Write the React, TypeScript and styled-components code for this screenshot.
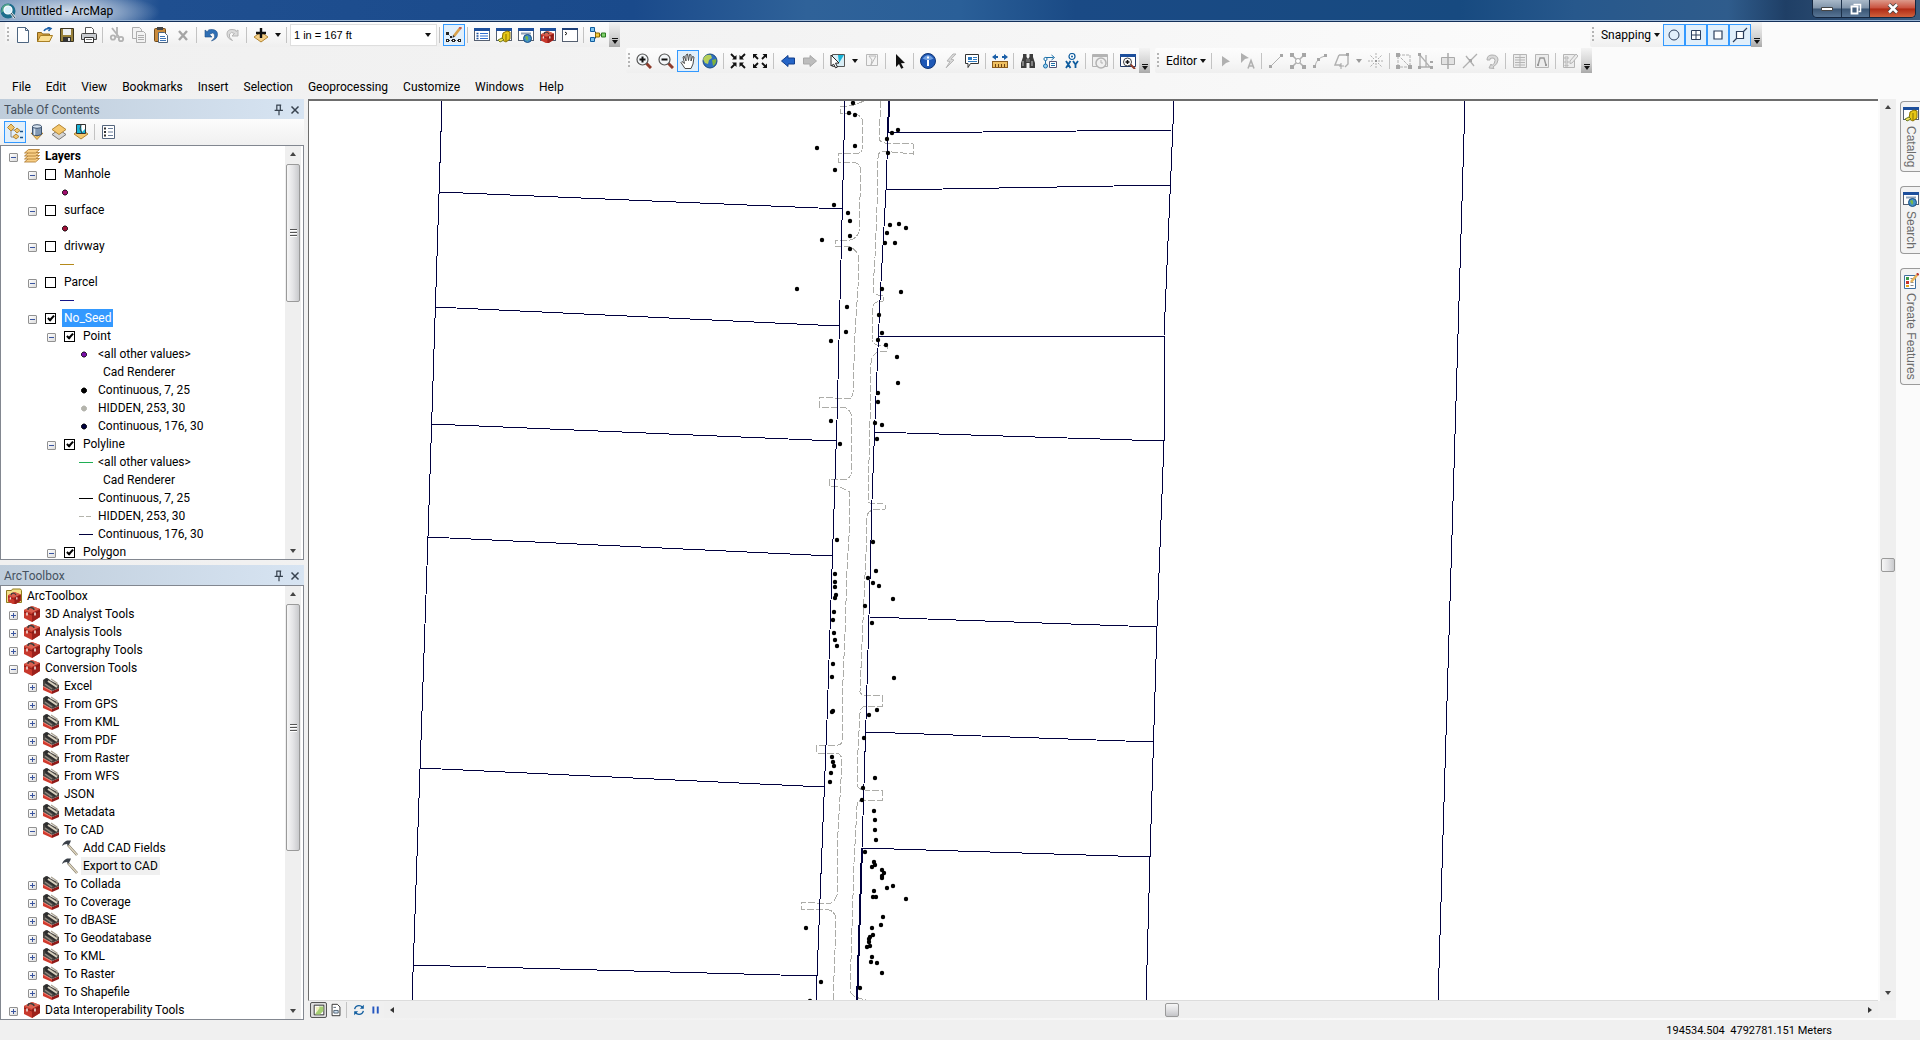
import React, { useState } from "react";
import styled, { createGlobalStyle, css } from "styled-components";

const GlobalStyle = createGlobalStyle`
  *, *::before, *::after { box-sizing: border-box; }
  html, body { margin: 0; padding: 0; }
  body {
    font-family: Roboto, "Open Sans", sans-serif;
    font-size: 12px;
    line-height: 18px;
    color: #000;
    background: #f0f0f0;
    overflow: hidden;
  }
  button, select, input { font: inherit; color: inherit; margin: 0; }
`;

/* ---------- icons ---------- */

const boxTool = (
  <>
    <path d="M0 4l8-4 8 3v8l-8 5-8-4z" fill="#c8382c" />
    <path d="M0 4l8-4 8 3-8 4z" fill="#d9604f" />
    <path d="M8 7l8-4v8l-8 5z" fill="#9c211b" />
    <path d="M0 6l8 3 8-4" stroke="#7a1612" fill="none" strokeWidth=".8" />
    <path d="M4 4q0-3 3-2.500 3 .5 3 2.500" stroke="#3c3c3c" fill="none" strokeWidth="1.400" />
    <path d="M3 6.500v3M11 6.500v3" stroke="#f3dcd8" strokeWidth="1.600" />
  </>
);
const toolset = (
  <>
    <path d="M0 8l9 5v3l-9-4z" fill="#d0392c" />
    <path d="M9 13l7-3v3l-7 3z" fill="#8e1a18" />
    <path d="M0 8V2l3-2 13 7v3l-7 3z" fill="#4b4743" />
    <path d="M1 2l3-2 3 2v2l6 4-1 3-6-4-3-1z" fill="#2e2e2e" />
    <path d="M2 6l7 5" stroke="#8f8a80" strokeWidth="1.500" />
    <path d="M5 3l9 6" stroke="#d9d2c0" strokeWidth="2" />
    <path d="M8 1l6 4v3" stroke="#a79f8e" strokeWidth="1.200" fill="none" />
    <path d="M0 8.500l9 5" stroke="#f28a7c" strokeWidth=".8" />
  </>
);
const win = (
  <>
    <rect x=".5" y="1.500" width="15" height="12" fill="#fff" stroke="#555f70" />
    <rect x="0" y="1" width="16" height="3" fill="#1d4f9c" />
  </>
);
const cylinder = (
  <>
    <path d="M7 6l4-2 3 1v7l-4 3-4-2z" fill="#e6c716" stroke="#8a7200" />
    <path d="M10 7v7" stroke="#8a7200" />
    <path d="M2 13l4-2 2 2-4 2z" fill="#f5e05a" stroke="#6b7a20" />
  </>
);
const diamond = (y: number, fill: string, stroke: string) => (
  <path d={`M8 ${y}l7 5-7 5-7-5z`} fill={fill} stroke={stroke} />
);

const GLYPHS: Record<string, React.ReactNode> = {
  app: (
    <>
      <circle cx="8" cy="8" r="7.500" fill="#1c6d8c" />
      <path d="M2 4q3-4 8-3l-2 3-4 4-3 2z" fill="#4fa08a" />
      <circle cx="8" cy="7" r="4" fill="#d7f0fb" stroke="#fff" strokeWidth="1.200" />
      <path d="M11 10l4 5" stroke="#e8e8e8" strokeWidth="2.500" />
      <path d="M11 10l4 5" stroke="#24465c" strokeWidth="1" />
    </>
  ),
  new: <path d="M2.500 .5h8l3 3v12h-11zM10.500 .5v3h3" fill="#fff" stroke="#4d6580" />,
  open: (
    <>
      <path d="M.5 14.500v-9h4l1 1.500h7v7.500z" fill="#d9a441" stroke="#8a6418" />
      <path d="M.5 14.500l3-6h12l-3 6z" fill="#fbdf92" stroke="#a87f25" />
      <path d="M7 4q1-2.500 5-2.500M10.500 0L14 1.500 11.500 4" stroke="#1b5fa8" fill="none" strokeWidth="1.500" />
    </>
  ),
  save: (
    <>
      <path d="M1.500 1.500h13v13h-13z" fill="#97803a" stroke="#3a3420" />
      <path d="M4 2h8v6H4z" fill="#eef0f2" />
      <path d="M4 10h8v5H4z" fill="#333" />
      <path d="M9 11h2v3H9z" fill="#ddd" />
    </>
  ),
  print: (
    <>
      <path d="M4.500 7V.5h6l2 2V7" fill="#fff" stroke="#555" />
      <path d="M.5 7.500q0-1 1-1h13q1 0 1 1v5H.5z" fill="#c9ccd0" stroke="#444" />
      <path d="M3.500 10.500h9v5h-9z" fill="#fff" stroke="#333" />
      <path d="M5 12.500h6" stroke="#777" />
    </>
  ),
  cut: (
    <g stroke="#b3b3b3" fill="none" strokeWidth="1.800">
      <path d="M3 1l7 9M8 0L8 9" />
      <circle cx="4" cy="10.500" r="2.200" />
      <circle cx="12" cy="12" r="2.200" />
      <path d="M6 9.500l4 1" />
    </g>
  ),
  copy: (
    <g fill="#f2f2f2" stroke="#adadad">
      <path d="M1.500 .5h7l2 2v9h-9z" />
      <path d="M5.500 4.500h7l2 2v9h-9z" />
      <path d="M7 8.500h6M7 10.500h6M7 12.500h6" />
    </g>
  ),
  paste: (
    <>
      <rect x="1.500" y="1.500" width="11" height="13" rx="1" fill="#c98a3a" stroke="#6f4a1b" />
      <rect x="4" y="0" width="6" height="3" fill="#444" />
      <path d="M5.500 5.500h6l3 3v7h-9z" fill="#fff" stroke="#4d6580" />
      <path d="M7 9.500h5M7 11.500h6M7 13.500h6" stroke="#3f74b5" />
    </>
  ),
  del: <path d="M4 4l8 9M12 4l-8 9" stroke="#a5a5a5" strokeWidth="2.400" />,
  undo: (
    <path
      d="M2 3v7h7L6.500 7.500Q10 4.500 11.500 7.500t-3 6.500Q14.500 12 14.500 7.500T9.500 2.500 4.500 5z"
      fill="#2f6fb5"
      stroke="#1d4d86"
      strokeWidth=".600"
    />
  ),
  redo: (
    <path
      d="M13 3v6H7l2.500-2.500Q6 4 4.500 7t3 6.500Q2 11.500 2 7t5-4.500 4 2z"
      fill="#dcdcdc"
      stroke="#b5b5b5"
    />
  ),
  add: (
    <>
      {diamond(5, "#f5cf86", "#b38634")}
      <path d="M8 1v10M3 6h10" stroke="#111" strokeWidth="2.400" />
    </>
  ),
  editor: (
    <>
      <path d="M8 9l5.500-7" stroke="#d9a24b" strokeWidth="2.800" />
      <path d="M13.500 2l1.500-2" stroke="#c8604c" strokeWidth="2.800" />
      <path d="M6.500 11l.5-3 2 1.500z" fill="#333" />
      <path d="M2 7l3 3M2 13.500h11" stroke="#333" strokeDasharray="2 1" />
      <path d="M0 5h3v3H0zM4 9h2v2H4zM0 12h3v3H0zM6 12h3v3H6zM12 12h3v3h-3z" fill="#222" />
      <path d="M1 13h1v1H1zM7 13h1v1H7zM13 13h1v1h-1z" fill="#fff" />
    </>
  ),
  toc: (
    <>
      {win}
      <path d="M2.500 6.500h2M2.500 9h2M2.500 11.500h2" stroke="#1d4f9c" strokeWidth="1.500" />
      <path d="M6 6.500h8M6 9h8M6 11.500h8" stroke="#2f6fd0" />
    </>
  ),
  catalog: (
    <>
      {win}
      {cylinder}
    </>
  ),
  search: (
    <>
      {win}
      <path d="M3 6.500h10" stroke="#8fa2b8" strokeWidth="2" />
      <circle cx="9.500" cy="11.500" r="4" fill="#3f8fc6" stroke="#1b4f83" />
      <path d="M7 10q2-2 3 0t-1 4z" fill="#79b64b" />
    </>
  ),
  toolboxWin: (
    <>
      {win}
      <g transform="translate(1 4) scale(.8)">{boxTool}</g>
    </>
  ),
  python: (
    <>
      <rect x=".5" y="1.500" width="15" height="13" fill="#fff" stroke="#555f70" />
      <rect x="0" y="1" width="16" height="2" fill="#1d3f78" />
      <path d="M3 5l2 1.500L3 8" stroke="#111" fill="none" />
    </>
  ),
  model: (
    <>
      <path d="M4 3l3 5-3 5M9 8h4" stroke="#333" fill="none" />
      <path d="M.5 .5h4v4h-4zM.5 10.500h4v4h-4z" fill="#7cc3ee" stroke="#0f5c9e" />
      <path d="M5.500 6h4v4h-4z" fill="#f5c93a" stroke="#8a6a00" />
      <path d="M11.500 6h4v4h-4z" fill="#7fd06a" stroke="#2c7a20" />
    </>
  ),
  zoomIn: (
    <>
      <path d="M10 10l5 5" stroke="#8d3a2a" strokeWidth="3" />
      <circle cx="6.500" cy="6.500" r="5.500" fill="#f3f6f8" stroke="#555" strokeWidth="1.200" />
      <path d="M6.500 3.500v6M3.500 6.500h6" stroke="#111" strokeWidth="2" />
    </>
  ),
  zoomOut: (
    <>
      <path d="M10 10l5 5" stroke="#8d3a2a" strokeWidth="3" />
      <circle cx="6.500" cy="6.500" r="5.500" fill="#f3f6f8" stroke="#555" strokeWidth="1.200" />
      <path d="M3.500 6.500h6" stroke="#111" strokeWidth="2" />
    </>
  ),
  pan: (
    <path
      d="M5 15.500L1 9.500l1-1 2.500 2L3 4l1.200-.8L6 8V2l1.500-1L8.500 7.500 9.500 1.500l1.500.3V8l1.500-4.500 1.500.5-1 7-2 4.500z"
      fill="#fff"
      stroke="#4a4a4a"
    />
  ),
  globe: (
    <>
      <circle cx="8" cy="8" r="7" fill="#2f6fc0" stroke="#1a4b7c" />
      <path d="M3 3q3-2 6-1l1 3-3 2-1 4-3-1-2-4z" fill="#b6d05a" />
      <path d="M10 7l4-1q1 4-3 7z" fill="#7fb33c" />
    </>
  ),
  fixedIn: (
    <g stroke="#111" strokeWidth="1.800">
      <path d="M1 1l4 4M15 1l-4 4M1 15l4-4M15 15l-4-4" />
      <path d="M6.500 2v4.500H2zM9.500 2v4.500H14zM6.500 14V9.500H2zM9.500 14V9.500H14z" fill="#111" stroke="none" />
    </g>
  ),
  fixedOut: (
    <g stroke="#111" strokeWidth="1.800">
      <path d="M2 2l4 4M14 2l-4 4M2 14l4-4M14 14l-4-4" />
      <path d="M1 5.500V1h4.500zM15 5.500V1h-4.500zM1 10.500V15h4.500zM15 10.500V15h-4.500z" fill="#111" stroke="none" />
    </g>
  ),
  back: <path d="M1.500 8L8 2.500V5h6.500v6H8v2.500z" fill="#2565c7" stroke="#123f8c" />,
  forward: <path d="M14.500 8L8 2.500V5H1.500v6H8v2.500z" fill="#bdbdbd" stroke="#a8a8a8" />,
  select: (
    <>
      <path d="M2.500 1.500h12v12h-12z" fill="#d9edf5" stroke="#555" />
      <path d="M8 2h6L9 10z" fill="#19b4d8" />
      <path d="M1 2l8 8-3.500.2L7.500 14l-2 .8-1.800-3.600L1 13z" fill="#fff" stroke="#222" />
    </>
  ),
  clear: (
    <g fill="#f4f4f4" stroke="#b9b9b9">
      <path d="M2.500 1.500h11v11h-11z" />
      <path d="M5 3l3 4-1 5 5-9z" />
    </g>
  ),
  pointer: <path d="M4 1l9 9-4 .3 2.500 4.500-2.300 1-2.200-4.700L4 14z" fill="#111" />,
  info: (
    <>
      <circle cx="8" cy="8" r="7.500" fill="#1f58b5" stroke="#0f3577" />
      <path d="M2.500 5.500Q8-1.500 13.500 5.500 8 9 2.500 5.500z" fill="#6f9ee0" />
      <path d="M7 7h2v6H7zM7 3.500h2v2H7z" fill="#fff" />
    </>
  ),
  bolt: <path d="M11 1L5 8l3 .5L4 15l8-8-3-.8L14 1z" fill="#dadada" stroke="#b5b5b5" />,
  popup: (
    <>
      <path d="M1.500 1.500h13v9h-8l-2.500 4v-4H1.500z" fill="#fff" stroke="#333" />
      <path d="M4 4h4v3H4z" fill="#2f7ac0" />
      <path d="M9 4.500h4M9 6.500h4M4 8.500h9" stroke="#2f7ac0" />
    </>
  ),
  measure: (
    <>
      <path d="M0 4l4-3v2h2v2H4v2zM16 4l-4-3v2h-2v2h2v2z" fill="#1b5fa8" />
      <rect x=".5" y="8.500" width="15" height="6" fill="#f0c060" stroke="#8a5a1c" />
      <path d="M3.500 11v3M6.500 11v3M9.500 11v3M12.500 11v3" stroke="#6f4312" />
    </>
  ),
  find: (
    <>
      <path d="M3 1h3.500v3L8 6l1.500-2V1H13v3l2 6v5H9.500v-5h-3v5H1v-5l2-6z" fill="#3d3d3d" />
      <path d="M3 8v5M12 8v5" stroke="#999" strokeWidth="1.500" />
      <path d="M6 6h4v3H6z" fill="#666" />
    </>
  ),
  route: (
    <>
      <path d="M3.500 13V4.500h8M9.500 2l3 2.500-3 2.500" stroke="#1b6fa8" fill="none" />
      <path d="M7.500 8.500h7v6h-7z" fill="#fff" stroke="#557" />
      <path d="M9 10.500h4M9 12.500h4" stroke="#1b6fa8" />
      <circle cx="3.500" cy="13" r="2" fill="#9cd0f0" stroke="#1b6fa8" />
      <circle cx="3.500" cy="6" r="1.600" fill="#fff" stroke="#1b6fa8" />
    </>
  ),
  xy: (
    <>
      <circle cx="8" cy="3.500" r="3" fill="#fff" stroke="#0f5c9e" strokeWidth="1.200" />
      <circle cx="8" cy="3.500" r="1" fill="#0f5c9e" />
      <path d="M2 8l4.500 7M6.500 8L2 15M9 8l2.500 3.500L14 8M11.500 11.500V15" stroke="#0f5c9e" strokeWidth="1.800" fill="none" />
    </>
  ),
  time: (
    <g fill="#f0f0f0" stroke="#b3b3b3">
      <path d="M.5 1.500h15v12H.5z" />
      <path d="M1 3h14" strokeWidth="2" />
      <circle cx="9" cy="10" r="5" strokeWidth="1.500" />
      <path d="M9 7v3h2" fill="none" />
    </g>
  ),
  viewer: (
    <>
      <path d="M.5 1.500h15v12H.5z" fill="#fff" stroke="#223a66" />
      <path d="M0 1h16v3H0z" fill="#1d4f9c" />
      <path d="M10 11l5 5" stroke="#8d3a2a" strokeWidth="2" />
      <circle cx="7.500" cy="9" r="4" fill="#fff" stroke="#444" />
      <path d="M7.500 7v4M5.500 9h4" stroke="#111" strokeWidth="1.500" />
    </>
  ),
  edArrow: <path d="M4 3l8 5.500L8 10l-4 3.500z" fill="#b0b0b0" />,
  edArrowA: (
    <>
      <path d="M1 0l8 5-4 1-4 4z" fill="#b0b0b0" />
      <path d="M8 15.500l3-8 3 8M9.500 13h3.500" stroke="#b0b0b0" fill="none" strokeWidth="1.600" />
    </>
  ),
  edLine: (
    <>
      <path d="M3 13L13 3" stroke="#b0b0b0" />
      <path d="M1 12h3v3H1zM12 1h3v3h-3z" fill="#a6a6a6" />
    </>
  ),
  edCross: (
    <>
      <path d="M2 2l12 12M14 2L2 14" stroke="#b0b0b0" strokeWidth="1.500" />
      <path d="M0 0h4v4H0zM12 0h4v4h-4zM0 12h4v4H0zM12 12h4v4h-4z" fill="#a6a6a6" />
      <circle cx="8" cy="8" r="2.500" fill="#fff" stroke="#a6a6a6" />
    </>
  ),
  edCurve: (
    <>
      <path d="M3 14Q4 5 13 3" stroke="#b0b0b0" fill="none" />
      <path d="M1 12h3v3H1zM5 5h3v3H5zM12 1h3v3h-3z" fill="#a6a6a6" />
    </>
  ),
  edTrace: (
    <>
      <path d="M5 2h9v9l-3 3M5 2L1 12h6" stroke="#b0b0b0" fill="none" strokeWidth="1.400" />
      <path d="M7 10v6M5 13h5" stroke="#a6a6a6" />
      <path d="M12 0h3v3h-3z" fill="#a6a6a6" />
    </>
  ),
  edPoint: (
    <g stroke="#b0b0b0" strokeDasharray="2 1">
      <path d="M8 0v6M8 10v6M0 8h6M10 8h6M2.500 2.500L6 6M13.500 2.500L10 6M2.500 13.500L6 10M13.500 13.500L10 10" />
      <path d="M7 7h2v2H7z" fill="#999" stroke="none" />
    </g>
  ),
  edVerts: (
    <>
      <path d="M2 14V2l12 12zM2 2h12v12" stroke="#b0b0b0" fill="none" strokeDasharray="3 1" />
      <path d="M0 0h4v4H0zM12 12h4v4h-4zM0 12h4v4H0z" fill="#a6a6a6" />
    </>
  ),
  edReshape: (
    <>
      <path d="M2 14V2l10 12zM8 2v12" stroke="#b0b0b0" fill="none" strokeWidth="1.300" />
      <path d="M0 0h3v3H0zM0 13h3v3H0zM12 13h3v3h-3zM12 8h3v2h-3z" fill="#a6a6a6" />
    </>
  ),
  edCut: (
    <>
      <path d="M1.500 4.500h13v7h-13z" fill="#e2e2e2" stroke="#a9a9a9" />
      <path d="M8 0v16" stroke="#a9a9a9" strokeWidth="1.500" />
    </>
  ),
  edSplit: (
    <>
      <path d="M1 15L15 1M4 3l8 10" stroke="#b0b0b0" strokeWidth="1.300" />
      <path d="M7 6h3v3H7z" fill="#a6a6a6" />
    </>
  ),
  edRotate: (
    <path d="M3 7q0-5 5-5 6 0 6 5 0 4-5 7l1 1.500-5-.5 2-4 1 1.500q3-2 3-5T8 5 6 7z" fill="#dadada" stroke="#b0b0b0" />
  ),
  edTable: (
    <g fill="#ececec" stroke="#b5b5b5">
      <path d="M1.500 1.500h13v13h-13z" />
      <path d="M3 4.500h10M3 7h10M3 9.500h10M3 12h10M8 2v12" />
    </g>
  ),
  edSketch: (
    <>
      <path d="M1.500 1.500h13v13h-13z" fill="#ececec" stroke="#b5b5b5" />
      <path d="M4 12l2-7h4l2 7" stroke="#999" fill="none" strokeWidth="1.400" />
      <path d="M3 11h2v2H3zM11 11h2v2h-2z" fill="#999" />
    </>
  ),
  edCreate: (
    <g fill="#ececec" stroke="#b5b5b5">
      <path d="M1.500 1.500h11v13h-11z" />
      <path d="M3 4h3v2H3zM3 8h3v2H3zM3 12h3v1H3zM8 8l6-7 2 2-6 7-2 .5z" />
    </g>
  ),
  snapPoint: <circle cx="8" cy="8" r="5" fill="none" stroke="#2c3e5c" />,
  snapEnd: <path d="M3.500 3.500h9v9h-9zM8 3.500v9M3.500 8h9" fill="#fff" stroke="#2c3e5c" />,
  snapVertex: <path d="M4 4h8v8H4z" fill="#fff" stroke="#2c3e5c" strokeWidth="1.200" />,
  snapEdge: <path d="M4.500 4.500h7v7h-7zM1 15l3.500-3.500M11.500 4.500L15 1" fill="#fff" stroke="#2c3e5c" strokeWidth="1.200" />,
  byDrawing: (
    <>
      <path d="M4 5v8M4 6h5M4 13h5" stroke="#888" fill="none" />
      <path d="M4 0l3.500 3.500L4 7 .5 3.500zM10 4l3 2.500L10 9 7.500 6.500zM9 10l3 2.500L9 15l-3-2.500z" fill="#f0c56e" stroke="#b38634" />
      <path d="M13 7.500h3M13 13.500h3" stroke="#1b4f83" strokeWidth="1.500" />
    </>
  ),
  bySource: (
    <>
      <path d="M2 9l6 3 6-3-6 6.500z" fill="#f5c86e" stroke="#b38634" />
      <path d="M3.500 2.500v8q4.500 2.500 9 0v-8z" fill="#8299b5" stroke="#3e536e" />
      <path d="M5.500 4v7" stroke="#d8e4f0" strokeWidth="1.500" />
      <ellipse cx="8" cy="2.500" rx="4.500" ry="1.800" fill="#d8e4f0" stroke="#3e536e" />
    </>
  ),
  byVisibility: (
    <>
      {diamond(5.5, "#d5d5d5", "#777")}
      {diamond(0.5, "#f5c86e", "#b38634")}
    </>
  ),
  bySelection: (
    <>
      {diamond(5, "#f5c86e", "#b38634")}
      <path d="M3.500 .5h9v9h-9z" fill="#19b4d8" stroke="#333" />
      <path d="M8 1h4v4l-3 3z" fill="#fff" />
      <path d="M8 1L7 5l2 4" stroke="#333" fill="none" />
    </>
  ),
  options: (
    <>
      <path d="M1.500 1.500h12v13h-12z" fill="#fff" stroke="#54657d" />
      <path d="M3 4.500h2M3 8h2M3 11.500h2" stroke="#333" strokeWidth="2" />
      <path d="M7 4.500h5M7 8h5M7 11.500h5" stroke="#6a7f9c" />
    </>
  ),
  layers: (
    <g fill="#f9cf86" stroke="#a8742a" strokeWidth=".800">
      <path d="M.5 14l4-3.500h11l-4 3.500z" />
      <path d="M.5 11l4-3.500h11l-4 3.500z" />
      <path d="M.5 8l4-3.500h11l-4 3.500z" />
      <path d="M.5 5l4-3.500h11l-4 3.500z" />
    </g>
  ),
  boxTool,
  toolset,
  hammer: (
    <>
      <path d="M6 5l9 10" stroke="#77705f" strokeWidth="2.600" />
      <path d="M6 5l9 10" stroke="#e2d9c2" strokeWidth="1.300" />
      <path d="M0 6q1-4 5-5.500h4L8 3 6 6 5 4Q2 4 0 6z" fill="#3a4048" />
    </>
  ),
  boxRoot: (
    <>
      <path d="M.5 2.500h5l1-1.500h8l1 1.500v12H.5z" fill="#f3e089" stroke="#8f7a1e" />
      <g transform="translate(2 4) scale(.8)">{boxTool}</g>
    </>
  ),
  create: (
    <>
      <path d="M1.500 2.500h11v13h-11z" fill="#fff" stroke="#3e6fa0" />
      <path d="M3 4h3v3H3z" fill="#3a9a4a" />
      <path d="M3 8h3v3H3z" fill="#c8322a" />
      <path d="M3 12h3v2H3z" fill="#e6a516" />
      <path d="M7.500 5.500h3M7.500 9.500h3M7.500 12.500h3" stroke="#888" />
      <path d="M8 9l6-7" stroke="#e6b35a" strokeWidth="2.600" />
      <path d="M14 2l1.500-1.500" stroke="#c23a2f" strokeWidth="2.600" />
    </>
  ),
  dataView: (
    <>
      <path d="M2.500 2.500h11v11h-11z" fill="#fff" stroke="#222" />
      <path d="M4 12l4-8h5v5l-4 4H4z" fill="#a5cf72" />
      <path d="M4 4l5 1-4 6z" fill="#f2f0c0" />
    </>
  ),
  layoutView: (
    <>
      <path d="M3.500 1.500h6l3 3v10h-9z" fill="#fff" stroke="#222" />
      <path d="M5 5h3M5.500 8.500h5v3h-5z" fill="#cfe2f5" stroke="#456" />
    </>
  ),
  refresh: (
    <g stroke="#0f5c9e" fill="none" strokeWidth="1.500">
      <path d="M3 7q1-4 5-4 2.500 0 4 2M13 9q-1 4-5 4-2.500 0-4-2" />
      <path d="M13.500 2v4.500H9zM2.500 14V9.500H7z" fill="#0f5c9e" stroke="none" />
    </g>
  ),
  pause: <path d="M5 4v8M10 4v8" stroke="#2456c0" strokeWidth="2.200" />,
  pin: (
    <path d="M5.500 2v6M5 2.500h5.500M9.500 2v6M3 8.500h9.500M8 9v5" stroke="#37424f" fill="none" strokeWidth="1.400" />
  ),
  close: <path d="M4 4l8 8M12 4l-8 8" stroke="#37424f" strokeWidth="1.700" />,
};

const Glyph = styled.svg.attrs({ viewBox: "0 0 16 16", "aria-hidden": true })`
  width: 16px;
  height: 16px;
  flex: none;
  display: block;
`;
const Icon = ({ name }: { name: string }) => <Glyph>{GLYPHS[name]}</Glyph>;

/* ---------- shell ---------- */

const Shell = styled.div`
  height: 100vh;
  display: flex;
  flex-direction: column;
  background: linear-gradient(90deg, #f0f0f0, #f3f3f3 40%, #fbfbfb 80%);
`;

const TitleBar = styled.header`
  display: flex;
  align-items: flex-start;
  height: 22px;
  flex: none;
  padding-right: 4px;
  border-bottom: 1px solid #14305a;
  box-shadow: inset 0 -1px 0 #9db8d6;
  background:
    radial-gradient(ellipse 90px 20px at 70px 12px, rgba(225, 232, 240, 0.9), rgba(160, 185, 214, 0) 100%),
    linear-gradient(90deg, #7e9abd 0, #6486b4 90px, #1f4f90 160px, #1a4a8b 33%, #2f6299 42%, #2a5f98 50%, #1a4a85 56%, #174a80 76%, #27588c 82%, #2f5c8c 90%, #1f3f66 93%, #3c5d80);
`;
const TitleText = styled.h1`
  display: flex;
  align-items: center;
  gap: 5px;
  margin: 0;
  padding: 2px 0 0 0;
  flex: 1;
  font-size: 12px;
  line-height: 18px;
  font-weight: 400;
`;
const WindowButtons = styled.div`
  display: flex;
  border: 1px solid #14263f;
  border-top: 0;
  border-radius: 0 0 5px 5px;
  overflow: hidden;
`;
const WindowButton = styled.button<{ $close?: boolean }>`
  width: ${(p) => (p.$close ? 46 : 28)}px;
  height: 17px;
  padding: 0;
  display: grid;
  place-items: center;
  border: 0;
  border-left: 1px solid #1c3049;
  color: #fff;
  background: ${(p) =>
    p.$close
      ? "linear-gradient(#dd9a8b, #c9503c 48%, #b02a14 52%, #d0613c)"
      : "linear-gradient(#a9b9c9, #7f93a9 48%, #3a5573 52%, #587595)"};
  &:first-child { border-left: 0; }
`;

const ToolbarArea = styled.div`
  flex: none;
`;
const ToolRow = styled.div<{ $indent: number }>`
  display: flex;
  justify-content: space-between;
  height: 26px;
  padding-left: ${(p) => p.$indent}px;
  padding-right: 158px;
`;
const ToolGroup = styled.div`
  display: flex;
  min-width: 0;
  gap: 5px;
`;
const Bar = styled.div`
  display: flex;
  align-items: center;
  height: 25px;
  border-radius: 2px;
  background: linear-gradient(#fdfdfd, #f6f6f6 60%, #efefef);
`;
const Grip = styled.span`
  width: 2px;
  height: 16px;
  margin: 0 3px 0 2px;
  background: repeating-linear-gradient(#b4b4b4 0 2px, transparent 2px 4px);
`;
const Separator = styled.span`
  width: 1px;
  height: 16px;
  margin: 0 3px 0 2px;
  background: #c3c3c3;
`;
const onState = css`
  border-color: #3399ff;
  background: #e1effb;
`;
const ToolButton = styled.button<{ $on?: boolean }>`
  width: 22px;
  height: 22px;
  padding: 0;
  display: grid;
  place-items: center;
  flex: none;
  border: 1px solid transparent;
  background: transparent;
  ${(p) => p.$on && onState}
`;
const TextButton = styled.button`
  display: flex;
  align-items: center;
  gap: 3px;
  padding: 0 3px 0 4px;
  border: 0;
  background: transparent;
`;
const Arrow = styled.span<{ $dim?: boolean }>`
  width: 0;
  height: 0;
  border: 3px solid transparent;
  border-top: 4px solid ${(p) => (p.$dim ? "#999" : "#111")};
  border-bottom: 0;
`;
const DropButton = styled.button`
  width: 12px;
  height: 22px;
  padding: 0;
  display: grid;
  place-items: center;
  border: 0;
  background: transparent;
`;
const Overflow = styled.button`
  align-self: stretch;
  width: 11px;
  padding: 0 0 3px;
  display: flex;
  flex-direction: column;
  align-items: center;
  justify-content: flex-end;
  gap: 1px;
  border: 0;
  background: linear-gradient(#f4f4f4, #d2d2d2 60%, #a9a9a9);
  &::before { content: ""; width: 6px; height: 1px; background: #111; }
`;
const ScaleWrap = styled.div`
  display: flex;
  align-items: center;
  width: 147px;
  height: 22px;
  padding-right: 5px;
  border: 1px solid #dedede;
  background: #fff;
`;
const ScaleSelect = styled.select`
  appearance: none;
  flex: 1;
  border: 0;
  padding: 0 3px;
  background: transparent;
  outline: none;
  font-family: "Liberation Sans", Arial, sans-serif;
  font-size: 11px;
`;

const MenuBar = styled.nav`
  display: flex;
  align-items: center;
  height: 25px;
  padding-left: 4px;
`;
const MenuItem = styled.button`
  padding: 0 7px 0 8px;
  border: 0;
  background: transparent;
`;

type Item = string;
const renderItems = (items: Item[], onNames: string[] = []) =>
  items.map((it, i) => {
    if (it === "|") return <Separator key={i} />;
    if (it === "v" || it === "V")
      return (
        <DropButton key={i} aria-label="More">
          <Arrow $dim={it === "V"} />
        </DropButton>
      );
    return (
      <ToolButton key={i} $on={onNames.includes(it)} aria-label={it}>
        <Icon name={it} />
      </ToolButton>
    );
  });

const OverflowButton = () => (
  <Overflow aria-label="Toolbar options">
    <Arrow />
  </Overflow>
);

/* ---------- body ---------- */

const Body = styled.main`
  flex: 1;
  min-height: 0;
  display: flex;
`;
const Side = styled.aside`
  width: 304px;
  flex: none;
  display: flex;
  flex-direction: column;
  gap: 5px;
`;
const Panel = styled.section<{ $grow: number }>`
  flex: ${(p) => p.$grow} 1 0;
  min-height: 0;
  display: flex;
  flex-direction: column;
`;
const PanelHead = styled.div`
  display: flex;
  align-items: center;
  height: 20px;
  flex: none;
  padding: 2px 1px 0 4px;
  background: linear-gradient(90deg, #bfcddb, #d7e4f2);
`;
const PanelTitle = styled.h2`
  flex: 1;
  margin: 0;
  font-size: 12px;
  line-height: 18px;
  font-weight: 400;
  color: #46525f;
`;
const HeadButton = styled.button`
  width: 16px;
  height: 16px;
  padding: 0;
  border: 0;
  background: transparent;
  display: grid;
  place-items: center;
  & svg { width: 14px; height: 14px; }
`;
const PanelTools = styled.div`
  display: flex;
  align-items: center;
  height: 26px;
  flex: none;
  padding-left: 4px;
  background: linear-gradient(#fcfcfc, #f0f0f0);
`;
const TreeFrame = styled.div`
  flex: 1;
  min-height: 0;
  display: flex;
  padding-right: 2px;
  border: 1px solid #828790;
  background: #fff;
`;
const Tree = styled.ul`
  flex: 1;
  min-width: 0;
  margin: 0;
  padding: 1px 0 0;
  list-style: none;
  overflow: hidden;
`;
const Row = styled.li<{ $indent: number }>`
  display: flex;
  align-items: center;
  height: 18px;
  padding-left: ${(p) => p.$indent}px;
  white-space: pre;
`;
const Expander = styled.button<{ $open?: boolean }>`
  position: relative;
  width: 9px;
  height: 9px;
  flex: none;
  margin: 3px 6px 0 0;
  padding: 0;
  border: 1px solid #919191;
  border-radius: 1px;
  background: linear-gradient(135deg, #fff, #dcdcdc);
  &::before, &::after {
    content: "";
    position: absolute;
    left: 1px;
    top: 3px;
    width: 5px;
    height: 1px;
    background: #3a55a0;
  }
  &::after { transform: rotate(90deg); display: ${(p) => (p.$open ? "none" : "block")}; }
`;
const Check = styled.input`
  appearance: none;
  width: 11px;
  height: 11px;
  flex: none;
  margin: 1px 6px 0 2px;
  border: 1px solid #000;
  background: #fff;
  display: grid;
  place-items: center;
  &:checked::before {
    content: "";
    width: 4px;
    height: 7px;
    margin-top: -2px;
    border: solid #000;
    border-width: 0 2px 2px 0;
    transform: rotate(42deg);
  }
`;
const Label = styled.label<{ $selected?: boolean }>`
  padding: 0 2px;
  ${(p) => p.$selected && css`background: #3399ff; color: #fff;`}
`;
const RootLabel = styled.strong`
  padding: 0 5px;
  font-weight: 700;
`;
const TreeLabel = styled.span<{ $hot?: boolean }>`
  margin-left: 3px;
  padding: 0 2px;
  ${(p) => p.$hot && css`background: #f0f0f0;`}
`;
const Swatch = styled.svg`
  width: 14px;
  height: 7px;
  flex: none;
  margin-right: 5px;
`;

const ScrollTrack = styled.div<{ $axis: "x" | "y" }>`
  flex: none;
  display: flex;
  flex-direction: ${(p) => (p.$axis === "y" ? "column" : "row")};
  align-items: center;
  background: #efefef;
  ${(p) => (p.$axis === "y" ? "width: 16px;" : "height: 16px; flex: 1;")}
`;
const ScrollArrow = styled.button<{ $dir: "up" | "down" | "left" | "right" }>`
  width: 16px;
  height: 16px;
  padding: 0;
  display: grid;
  place-items: center;
  flex: none;
  border: 0;
  background: transparent;
  &::before {
    content: "";
    border: 3px solid transparent;
    ${(p) => p.$dir === "up" && "border-bottom: 4px solid #444; border-top: 0;"}
    ${(p) => p.$dir === "down" && "border-top: 4px solid #444; border-bottom: 0;"}
    ${(p) => p.$dir === "left" && "border-right: 4px solid #333; border-left: 0;"}
    ${(p) => p.$dir === "right" && "border-left: 4px solid #333; border-right: 0;"}
  }
`;
const Gap = styled.div<{ $grow: number }>`
  flex: ${(p) => p.$grow} 1 0;
`;
const Thumb = styled.div<{ $axis: "x" | "y"; $grow?: number }>`
  display: grid;
  place-items: center;
  flex: ${(p) => (p.$grow ? `${p.$grow} 1 0` : "0 0 14px")};
  border: 1px solid #9a9a9a;
  border-radius: 2px;
  ${(p) =>
    p.$axis === "y"
      ? "width: 14px; background: linear-gradient(90deg, #f6f6f6, #e4e4e6 50%, #c9cacd);"
      : "height: 14px; background: linear-gradient(#f6f6f6, #e0e0e2 50%, #c4c5c8);"}
`;
const ThumbGrip = styled.span`
  width: 7px;
  height: 8px;
  background: repeating-linear-gradient(#555 0 1px, #fff 1px 2px, transparent 2px 3px);
`;

const MapColumn = styled.section`
  flex: 1;
  min-width: 0;
  margin-left: 4px;
  padding-bottom: 2px;
  display: flex;
  flex-direction: column;
`;
const MapTop = styled.div`
  flex: 1;
  min-height: 0;
  display: flex;
  gap: 2px;
`;
const MapFrame = styled.div`
  flex: 1;
  min-width: 0;
  border-top: 2px solid #6d6d6d;
  border-left: 1px solid #6d6d6d;
  border-bottom: 1px solid #dcdcdc;
  background: #fff;
  overflow: hidden;
`;
const MapCanvas = styled.svg`
  display: block;
  width: 100%;
  height: 100%;
`;
const MapBottom = styled.div`
  display: flex;
  align-items: center;
  height: 17px;
  flex: none;
  padding-left: 2px;
  background: #f0f0f0;
`;
const ViewButton = styled.button<{ $on?: boolean }>`
  width: 17px;
  height: 16px;
  padding: 0;
  display: grid;
  place-items: center;
  border: 1px solid ${(p) => (p.$on ? "#555" : "transparent")};
  border-radius: 2px;
  background: ${(p) => (p.$on ? "#dcdcdc" : "transparent")};
  & svg { width: 14px; height: 14px; }
`;
const Corner = styled.div`
  width: 18px;
  height: 16px;
  background: #f0f0f0;
`;

const Dock = styled.div`
  width: 24px;
  flex: none;
  display: flex;
  flex-direction: column;
  align-items: flex-end;
  gap: 14px;
  padding: 2px 0 0 4px;
  background: #fbfbfb;
`;
const DockTab = styled.button`
  display: flex;
  align-items: center;
  gap: 4px;
  width: 20px;
  padding: 4px 0;
  writing-mode: vertical-rl;
  border: 1px solid #9b9b9b;
  border-right: 0;
  border-radius: 4px 0 0 4px;
  background: #f3f3f3;
  color: #6b6b6b;
  font-family: "Liberation Sans", Arial, sans-serif;
  font-size: 12px;
  line-height: 16px;
`;

const StatusBar = styled.footer`
  display: flex;
  justify-content: flex-end;
  align-items: center;
  height: 20px;
  flex: none;
  padding: 1px 88px 0 0;
  background: #f0f0f0;
  font-size: 11px;
  white-space: pre;
`;

const VScroll = ({ before, size, after, grip }: { before: number; size?: number; after: number; grip?: boolean }) => (
  <ScrollTrack $axis="y">
    <ScrollArrow $dir="up" aria-label="Scroll up" />
    <Gap $grow={before} />
    <Thumb $axis="y" $grow={size}>{grip && <ThumbGrip />}</Thumb>
    <Gap $grow={after} />
    <ScrollArrow $dir="down" aria-label="Scroll down" />
  </ScrollTrack>
);

const Head = ({ title }: { title: string }) => (
  <PanelHead>
    <PanelTitle>{title}</PanelTitle>
    <HeadButton aria-label={`Pin ${title}`}><Icon name="pin" /></HeadButton>
    <HeadButton aria-label={`Close ${title}`}><Icon name="close" /></HeadButton>
  </PanelHead>
);

/* ---------- table of contents ---------- */

type TocEntry =
  | { kind: "layer"; level: 1 | 2; name: string; on: boolean; selected?: boolean }
  | { kind: "symbol"; level: 1 | 2; shape: "dot" | "line" | "dash" | "none"; color: string; text?: string };

const TOC: TocEntry[] = [
  { kind: "layer", level: 1, name: "Manhole", on: false },
  { kind: "symbol", level: 1, shape: "dot", color: "#a0106e" },
  { kind: "layer", level: 1, name: "surface", on: false },
  { kind: "symbol", level: 1, shape: "dot", color: "#a01038" },
  { kind: "layer", level: 1, name: "drivway", on: false },
  { kind: "symbol", level: 1, shape: "line", color: "#b58a1a" },
  { kind: "layer", level: 1, name: "Parcel", on: false },
  { kind: "symbol", level: 1, shape: "line", color: "#16168a" },
  { kind: "layer", level: 1, name: "No_Seed", on: true, selected: true },
  { kind: "layer", level: 2, name: "Point", on: true },
  { kind: "symbol", level: 2, shape: "dot", color: "#7a10a8", text: "<all other values>" },
  { kind: "symbol", level: 2, shape: "none", color: "", text: "Cad Renderer" },
  { kind: "symbol", level: 2, shape: "dot", color: "#000000", text: "Continuous, 7, 25" },
  { kind: "symbol", level: 2, shape: "dot", color: "#b4b4ac", text: "HIDDEN, 253, 30" },
  { kind: "symbol", level: 2, shape: "dot", color: "#00003c", text: "Continuous, 176, 30" },
  { kind: "layer", level: 2, name: "Polyline", on: true },
  { kind: "symbol", level: 2, shape: "line", color: "#1fae54", text: "<all other values>" },
  { kind: "symbol", level: 2, shape: "none", color: "", text: "Cad Renderer" },
  { kind: "symbol", level: 2, shape: "line", color: "#000000", text: "Continuous, 7, 25" },
  { kind: "symbol", level: 2, shape: "dash", color: "#b4b4ac", text: "HIDDEN, 253, 30" },
  { kind: "symbol", level: 2, shape: "line", color: "#00003c", text: "Continuous, 176, 30" },
  { kind: "layer", level: 2, name: "Polygon", on: true },
];

const LayerRow = ({ entry }: { entry: Extract<TocEntry, { kind: "layer" }> }) => {
  const [on, setOn] = useState(entry.on);
  const id = `layer-${entry.name}`;
  return (
    <Row $indent={entry.level === 1 ? 27 : 46}>
      <Expander $open aria-label={`Collapse ${entry.name}`} />
      <Check type="checkbox" id={id} checked={on} onChange={() => setOn(!on)} />
      <Label htmlFor={id} $selected={entry.selected}>{entry.name}</Label>
    </Row>
  );
};

const SymbolRow = ({ entry }: { entry: Extract<TocEntry, { kind: "symbol" }> }) => (
  <Row $indent={entry.shape === "none" ? 102 : entry.level === 1 ? 59 : 78}>
    {entry.shape !== "none" && (
      <Swatch viewBox="0 0 14 7" aria-hidden>
        {entry.shape === "dot" ? (
          <path
            d="M4 1h2l1.500 1.500v2L6 6H4L2.500 4.500v-2z"
            fill={entry.color}
            stroke={entry.color === "#b4b4ac" ? entry.color : "#000"}
            strokeWidth=".8"
          />
        ) : (
          <path
            d="M0 3.500h14"
            stroke={entry.color}
            strokeDasharray={entry.shape === "dash" ? "5 2" : undefined}
          />
        )}
      </Swatch>
    )}
    {entry.text}
  </Row>
);

const TableOfContents = () => (
  <Panel $grow={461}>
    <Head title="Table Of Contents" />
    <PanelTools>{renderItems(["byDrawing", "bySource", "byVisibility", "bySelection", "|", "options"], ["byDrawing"])}</PanelTools>
    <TreeFrame>
      <Tree>
        <Row $indent={8}>
          <Expander $open aria-label="Collapse Layers" />
          <Icon name="layers" />
          <RootLabel>Layers</RootLabel>
        </Row>
        {TOC.map((e, i) => (e.kind === "layer" ? <LayerRow key={i} entry={e} /> : <SymbolRow key={i} entry={e} />))}
      </Tree>
      <VScroll before={2} size={136} after={240} grip />
    </TreeFrame>
  </Panel>
);

/* ---------- toolbox ---------- */

type ToolNode = { level: 1 | 2 | 3; name: string; open?: boolean; hot?: boolean };
const TOOLS: ToolNode[] = [
  { level: 1, name: "3D Analyst Tools" },
  { level: 1, name: "Analysis Tools" },
  { level: 1, name: "Cartography Tools" },
  { level: 1, name: "Conversion Tools", open: true },
  { level: 2, name: "Excel" },
  { level: 2, name: "From GPS" },
  { level: 2, name: "From KML" },
  { level: 2, name: "From PDF" },
  { level: 2, name: "From Raster" },
  { level: 2, name: "From WFS" },
  { level: 2, name: "JSON" },
  { level: 2, name: "Metadata" },
  { level: 2, name: "To CAD", open: true },
  { level: 3, name: "Add CAD Fields" },
  { level: 3, name: "Export to CAD", hot: true },
  { level: 2, name: "To Collada" },
  { level: 2, name: "To Coverage" },
  { level: 2, name: "To dBASE" },
  { level: 2, name: "To Geodatabase" },
  { level: 2, name: "To KML" },
  { level: 2, name: "To Raster" },
  { level: 2, name: "To Shapefile" },
  { level: 1, name: "Data Interoperability Tools" },
];
const TOOL_INDENT = { 1: 8, 2: 27, 3: 61 };
const TOOL_ICON = { 1: "boxTool", 2: "toolset", 3: "hammer" };

const Toolbox = () => (
  <Panel $grow={455}>
    <Head title="ArcToolbox" />
    <TreeFrame>
      <Tree>
        <Row $indent={5}>
          <Icon name="boxRoot" />
          <TreeLabel>ArcToolbox</TreeLabel>
        </Row>
        {TOOLS.map((t) => (
          <Row key={t.name} $indent={TOOL_INDENT[t.level]}>
            {t.level < 3 && <Expander $open={t.open} aria-label={`${t.open ? "Collapse" : "Expand"} ${t.name}`} />}
            <Icon name={TOOL_ICON[t.level]} />
            <TreeLabel $hot={t.hot}>{t.name}</TreeLabel>
          </Row>
        ))}
      </Tree>
      <VScroll before={2} size={246} after={152} grip />
    </TreeFrame>
  </Panel>
);

/* ---------- map ---------- */

const PARCELS = [
  "M442 101L428 537L412 1002",
  "M845 101L841 260L837 420L827 720L816 1002",
  "M889 101L886 190L880 300L875 420L872 500L870 580L866 720L862 848L857 1002",
  "M1174 101L1164 336V441L1157 627L1150 857L1146 1002",
  "M1465 101L1438 1002",
  "M439 192L842 209",
  "M435 307L839 326",
  "M431 424L836 441",
  "M428 537L832 556",
  "M420 768L824 787",
  "M413 965L817 976",
  "M888 133L1172 130",
  "M886 190L1171 185",
  "M879 337L1164 336",
  "M874 432L1164 441",
  "M870 617L1157 627",
  "M866 732L1154 742",
  "M862 848L1150 857",
];
const HEAVY = ["M889 101L888 133", "M862 848L857 1002"];

const KERBS = [
  "M864 101L854 105L840 107V113L854 113Q863 116 863 123L862 150Q861 154 854 154L838 153V162L856 163Q861 165 861 172L860 197L859 232Q856 239 850 240H835V246L850 247Q859 251 859 260L858 287L855 333L853 393Q852 399 848 399L819 397V407H843Q852 409 852 420L851 475L848 479H829V486L840 487L850 492L849 537L847 570L845 633L843 680L842 742Q841 745 838 745H818Q816 745 816 748V751Q816 753 818 753H838Q842 755 842 762L840 797L837 850V895Q834 903 828 904L801 902V909L829 910Q836 912 836 920L835 950L833 1002",
  "M881 101L879 138Q880 143 885 143L913 144V154L882 151Q878 152 878 158L877 207L875 257L873 290Q874 295 878 295H883V301L877 302Q873 303 873 307L872 340Q873 344 877 345L887 346V351L878 352Q871 355 871 363L870 420L868 502L870 503H883L885 505V509L872 510Q867 512 867 517L866 553L863 620L860 692Q861 695 864 695H882V706H865Q860 708 860 713L858 750L857 785Q859 790 865 790H882V800H862Q857 801 857 806L854 863L852 927L850 992L855 997L869 1001",
];

const POINTS: [number, number][] = [
  [853, 103], [849, 113], [855, 115], [855, 146], [817, 148], [835, 170], [834, 205], [848, 213], [850, 221],
  [850, 236], [850, 249], [822, 240], [797, 289], [847, 307], [846, 332], [831, 341], [898, 130], [892, 133],
  [887, 139], [888, 153], [890, 225], [899, 224], [906, 228], [887, 233], [885, 243], [895, 243], [882, 289],
  [901, 292], [879, 315], [882, 333], [878, 340], [886, 345], [897, 357], [898, 383], [878, 393], [878, 402],
  [831, 421], [840, 444], [875, 423], [882, 425], [877, 439], [837, 540], [873, 542], [835, 574], [835, 582],
  [835, 587], [836, 595], [835, 598], [834, 612], [833, 620], [834, 633], [835, 640], [837, 646], [833, 664],
  [832, 677], [833, 711], [832, 712], [876, 571], [868, 578], [873, 583], [879, 586], [893, 599], [865, 606],
  [872, 623], [894, 678], [877, 710], [869, 715], [864, 738], [875, 778], [863, 788], [862, 800], [874, 811],
  [875, 820], [875, 830], [876, 840], [865, 852], [874, 862], [875, 865], [872, 867], [882, 870], [884, 873],
  [882, 876], [882, 878], [893, 886], [887, 888], [874, 891], [873, 897], [876, 897], [906, 899], [883, 917],
  [881, 925], [872, 928], [873, 935], [870, 937], [869, 939], [869, 942], [870, 946], [867, 947], [872, 957],
  [871, 962], [877, 963], [882, 973], [860, 988], [832, 757], [833, 762], [834, 766], [831, 773], [830, 782],
  [806, 928], [821, 982], [810, 1001],
];

const MapView = () => (
  <MapCanvas role="img" aria-label="Map">
    <g transform="translate(-309 -101)" fill="none">
      <g stroke="#acaca8" strokeDasharray="7 2" shapeRendering="crispEdges">
        {KERBS.map((d) => <path key={d} d={d} />)}
      </g>
      <g stroke="#00003f" shapeRendering="crispEdges">
        {PARCELS.map((d) => <path key={d} d={d} />)}
        {HEAVY.map((d) => <path key={d} d={d} strokeWidth="2" />)}
      </g>
      <g fill="#000">
        {POINTS.map(([x, y], i) => <circle key={i} cx={x} cy={y} r="2.200" />)}
      </g>
    </g>
  </MapCanvas>
);

export default function App() {
  const [scale, setScale] = useState("1 in = 167 ft");
  return (
    <>
      <GlobalStyle />
      <Shell>
        <TitleBar>
          <TitleText><Icon name="app" />Untitled - ArcMap</TitleText>
          <WindowButtons>
            <WindowButton aria-label="Minimize">
              <svg width="12" height="6" aria-hidden><path d="M.5 1.500h11v3H.5z" fill="#fff" stroke="#444" /></svg>
            </WindowButton>
            <WindowButton aria-label="Restore">
              <svg width="12" height="12" aria-hidden>
                <path d="M3.500 1.500h7v7h-2" fill="none" stroke="#fff" strokeWidth="1.500" />
                <path d="M1.500 3.500h6v7h-6z" fill="#46607d" stroke="#fff" strokeWidth="1.800" />
              </svg>
            </WindowButton>
            <WindowButton $close aria-label="Close">
              <svg width="12" height="11" aria-hidden>
                <path d="M2 1.500l8 8M10 1.500l-8 8" stroke="#444" strokeWidth="4" />
                <path d="M2 1.500l8 8M10 1.500l-8 8" stroke="#fff" strokeWidth="2.500" />
              </svg>
            </WindowButton>
          </WindowButtons>
        </TitleBar>

        <ToolbarArea>
          <ToolRow $indent={5}>
            <Bar>
              <Grip />
              {renderItems(["new", "open", "save", "print", "|", "cut", "copy", "paste", "del", "|", "undo", "redo", "|", "add", "v", "|"])}
              <ScaleWrap>
                <ScaleSelect aria-label="Map scale" value={scale} onChange={(e) => setScale(e.target.value)}>
                  <option>1 in = 167 ft</option>
                </ScaleSelect>
                <Arrow />
              </ScaleWrap>
              {renderItems(["|", "editor", "|", "toc", "catalog", "search", "toolboxWin", "python", "|", "model"], ["editor"])}
              <OverflowButton />
            </Bar>
            <Bar>
              <Grip />
              <TextButton>Snapping<Arrow /></TextButton>
              {renderItems(["snapPoint", "snapEnd", "snapVertex", "snapEdge"], ["snapPoint", "snapEnd", "snapVertex", "snapEdge"])}
              <OverflowButton />
            </Bar>
          </ToolRow>
          <ToolRow $indent={626}>
            <ToolGroup>
              <Bar>
                <Grip />
                {renderItems(
                  ["zoomIn", "zoomOut", "pan", "globe", "|", "fixedIn", "fixedOut", "|", "back", "forward", "|", "select", "v", "clear", "|", "pointer", "|", "info", "bolt", "popup", "|", "measure", "|", "find", "route", "xy", "|", "time", "|", "viewer"],
                  ["pan"]
                )}
                <OverflowButton />
              </Bar>
              <Bar>
                <Grip />
                <TextButton>Editor<Arrow /></TextButton>
                {renderItems(["|", "edArrow", "edArrowA", "|", "edLine", "edCross", "edCurve", "edTrace", "V", "edPoint", "|", "edVerts", "edReshape", "edCut", "edSplit", "edRotate", "|", "edTable", "edSketch", "|", "edCreate"])}
                <OverflowButton />
              </Bar>
            </ToolGroup>
          </ToolRow>
          <MenuBar>
            {["File", "Edit", "View", "Bookmarks", "Insert", "Selection", "Geoprocessing", "Customize", "Windows", "Help"].map((m) => (
              <MenuItem key={m}>{m}</MenuItem>
            ))}
          </MenuBar>
        </ToolbarArea>

        <Body>
          <Side>
            <TableOfContents />
            <Toolbox />
          </Side>
          <MapColumn>
            <MapTop>
              <MapFrame><MapView /></MapFrame>
              <VScroll before={435} after={405} />
            </MapTop>
            <MapBottom>
              <ViewButton $on aria-label="Data view"><Icon name="dataView" /></ViewButton>
              <ViewButton aria-label="Layout view"><Icon name="layoutView" /></ViewButton>
              <Separator />
              <ViewButton aria-label="Refresh"><Icon name="refresh" /></ViewButton>
              <ViewButton aria-label="Pause drawing"><Icon name="pause" /></ViewButton>
              <ScrollTrack $axis="x">
                <ScrollArrow $dir="left" aria-label="Scroll left" />
                <Gap $grow={763} />
                <Thumb $axis="x" />
                <Gap $grow={682} />
                <ScrollArrow $dir="right" aria-label="Scroll right" />
              </ScrollTrack>
              <Corner />
            </MapBottom>
          </MapColumn>
          <Dock>
            <DockTab><Icon name="catalog" />Catalog</DockTab>
            <DockTab><Icon name="search" />Search</DockTab>
            <DockTab><Icon name="create" />Create Features</DockTab>
          </Dock>
        </Body>

        <StatusBar>194534.504  4792781.151 Meters</StatusBar>
      </Shell>
    </>
  );
}
